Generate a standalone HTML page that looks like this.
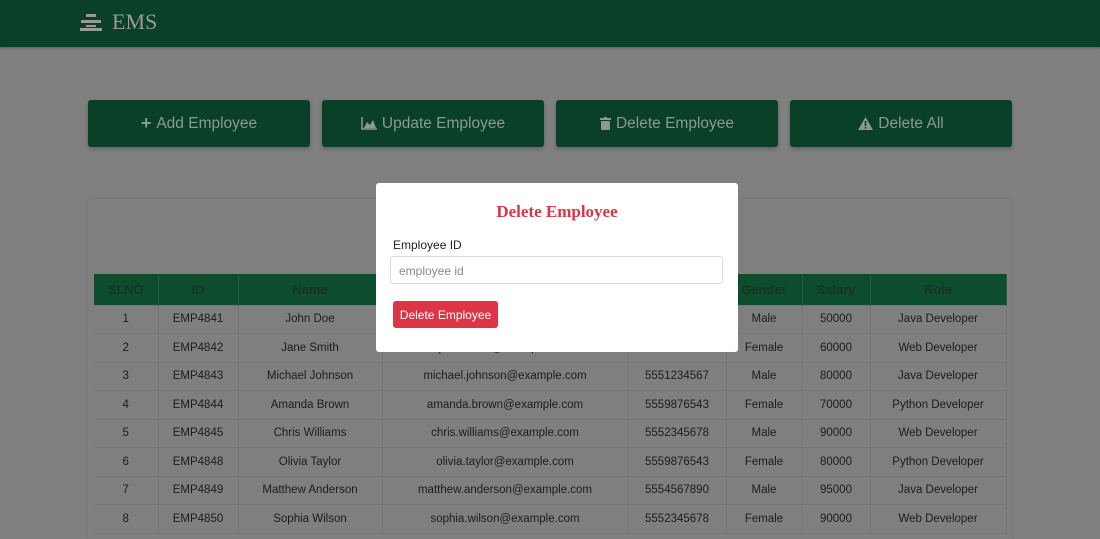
<!DOCTYPE html>
<html><head><meta charset="utf-8"><style>
*{box-sizing:border-box;margin:0;padding:0}
body{width:1100px;height:535px;overflow:hidden;background:#808080;font-family:"Liberation Sans",sans-serif;position:relative}
.nav{position:absolute;left:0;top:0;width:1100px;height:47px;background:#0a4028;box-shadow:0 1px 3px rgba(0,0,0,.3)}
.logo{position:absolute;left:80px;top:9px;color:#9a9a9a;font-family:"Liberation Serif",serif;font-size:22px;display:flex;align-items:center;gap:10px}
.btn{position:absolute;top:100px;width:222px;height:47px;background:#0a4028;border-radius:3px;color:#8a9a90;font-size:15.5px;display:flex;align-items:center;justify-content:center;gap:5px;box-shadow:0 2px 4px rgba(0,0,0,.25)}
.card{position:absolute;left:88px;top:199px;width:924px;height:340px;background:#7f7f7f;box-shadow:0 0 3px rgba(0,0,0,.15)}
table{position:absolute;left:94px;top:274px;border-collapse:collapse;font-size:11.5px;color:#1c1c1c}
th{background:#0c4d2e;color:#173325;height:31px;font-size:13px;font-weight:bold;border-right:1px solid #22603f}
td{height:28.5px;text-align:center;border:1px solid #777;border-left:none;border-right:1px solid #777}
th,td{text-align:center}
.modal{position:absolute;left:376px;top:183px;width:362px;height:169px;background:#fff;border-radius:3px}
.modal h2{position:absolute;top:19px;left:0;width:100%;text-align:center;color:#dc3545;font-family:"Liberation Serif",serif;font-size:17px}
.lbl{position:absolute;left:17px;top:55px;font-size:12px;color:#222}
.inp{position:absolute;left:14px;top:73px;width:333px;height:28px;border:1px solid #ddd;border-radius:3px;font-size:12px;color:#888;padding:7px 8px}
.db{position:absolute;left:17px;top:118px;width:105px;height:27px;background:#dc3545;border-radius:3px;color:#fff;font-size:12px;display:flex;align-items:center;justify-content:center}
</style></head><body>
<div class="nav"><div class="logo"><svg width="22" height="18" viewBox="0 0 22 18"><rect x="6" y="1" width="10" height="3" fill="#9a9a9a"/><rect x="1" y="7" width="20" height="3" fill="#9a9a9a"/><rect x="6" y="12" width="10" height="2" fill="#9a9a9a"/><rect x="0" y="15" width="22" height="3" fill="#9a9a9a"/></svg>EMS</div></div>
<div class="btn" style="left:88px"><b style="font-size:18px">+</b>Add Employee</div>
<div class="btn" style="left:322px"><svg width="16" height="13" viewBox="0 0 16 13"><path d="M1 0v12h15" stroke="#8a9a90" fill="none" stroke-width="1.5"/><path d="M3 11l3-6 3 3 3-5 3 8z" fill="#8a9a90"/></svg>Update Employee</div>
<div class="btn" style="left:556px"><svg width="11" height="13" viewBox="0 0 11 13"><rect x="0" y="1" width="11" height="2" fill="#8a9a90"/><rect x="4" y="0" width="3" height="2" fill="#8a9a90"/><rect x="1" y="4" width="9" height="9" rx="1" fill="#8a9a90"/></svg>Delete Employee</div>
<div class="btn" style="left:790px"><svg width="15" height="13" viewBox="0 0 15 13"><path d="M7.5 0L15 13H0z" fill="#8a9a90"/><rect x="6.7" y="4" width="1.6" height="5" fill="#0a4028"/><rect x="6.7" y="10" width="1.6" height="1.6" fill="#0a4028"/></svg>Delete All</div>
<div class="card"></div>
<table>
<tr><th style="width:64px">SI.NO</th><th style="width:80px">ID</th><th style="width:144px">Name</th><th style="width:246px">Email</th><th style="width:98px">Phone</th><th style="width:76px">Gender</th><th style="width:68px">Salary</th><th style="width:136px">Role</th></tr>
<tr><td>1</td><td>EMP4841</td><td>John Doe</td><td>john.doe@example.com</td><td>5551234567</td><td>Male</td><td>50000</td><td>Java Developer</td></tr>
<tr><td>2</td><td>EMP4842</td><td>Jane Smith</td><td>jane.smith@example.com</td><td>5559876543</td><td>Female</td><td>60000</td><td>Web Developer</td></tr>
<tr><td>3</td><td>EMP4843</td><td>Michael Johnson</td><td>michael.johnson@example.com</td><td>5551234567</td><td>Male</td><td>80000</td><td>Java Developer</td></tr>
<tr><td>4</td><td>EMP4844</td><td>Amanda Brown</td><td>amanda.brown@example.com</td><td>5559876543</td><td>Female</td><td>70000</td><td>Python Developer</td></tr>
<tr><td>5</td><td>EMP4845</td><td>Chris Williams</td><td>chris.williams@example.com</td><td>5552345678</td><td>Male</td><td>90000</td><td>Web Developer</td></tr>
<tr><td>6</td><td>EMP4848</td><td>Olivia Taylor</td><td>olivia.taylor@example.com</td><td>5559876543</td><td>Female</td><td>80000</td><td>Python Developer</td></tr>
<tr><td>7</td><td>EMP4849</td><td>Matthew Anderson</td><td>matthew.anderson@example.com</td><td>5554567890</td><td>Male</td><td>95000</td><td>Java Developer</td></tr>
<tr><td>8</td><td>EMP4850</td><td>Sophia Wilson</td><td>sophia.wilson@example.com</td><td>5552345678</td><td>Female</td><td>90000</td><td>Web Developer</td></tr>
</table>
<div class="modal"><h2>Delete Employee</h2><div class="lbl">Employee ID</div><div class="inp">employee id</div><div class="db">Delete Employee</div></div>
</body></html>
